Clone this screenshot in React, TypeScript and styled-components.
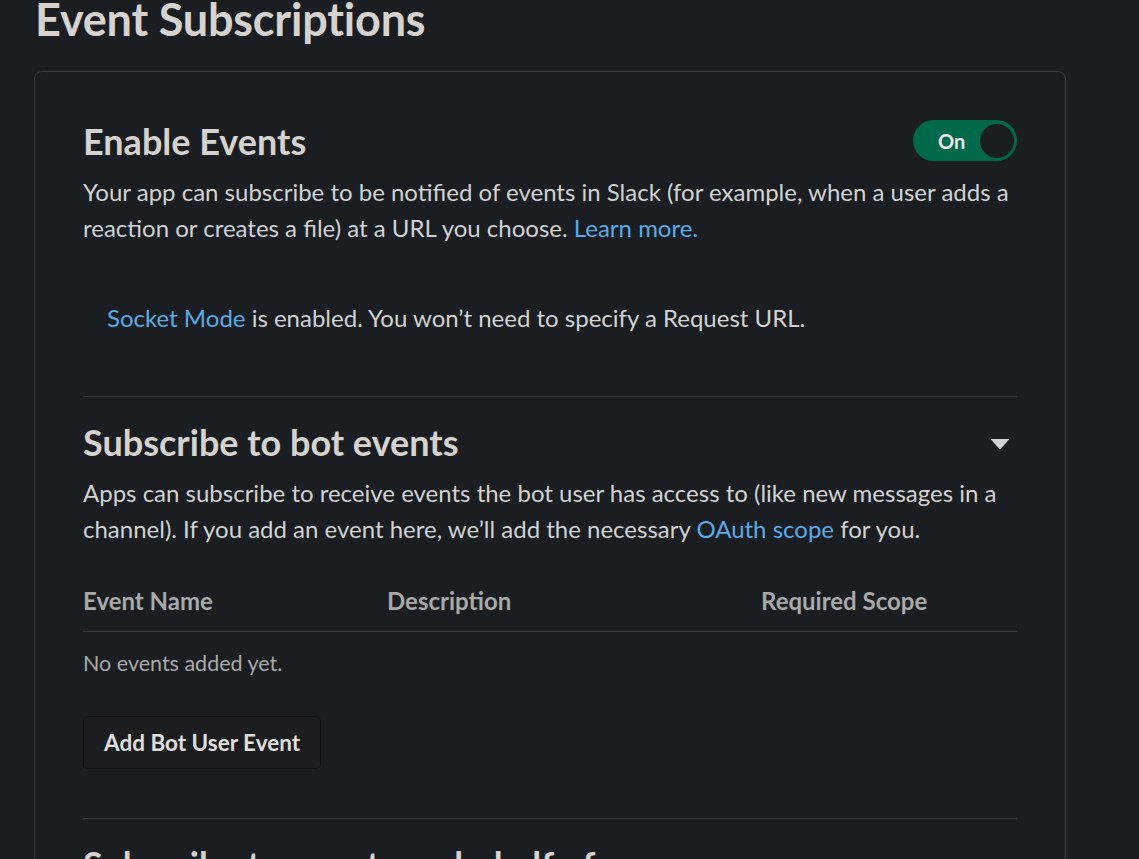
import React from "react";
import styled, { createGlobalStyle } from "styled-components";

const Global = createGlobalStyle`
  html, body {
    margin: 0;
    padding: 0;
    background: #1a1d21;
    overflow: hidden;
  }
  body {
    font-family: Lato, "Noto Sans", "Liberation Sans", sans-serif;
    color: #d1d2d3;
  }
`;

const Page = styled.div`
  width: 1139px;
  height: 859px;
  overflow: hidden;
  box-sizing: border-box;
  padding: 0 74px 0 34px;
`;

const Title = styled.h1`
  margin: -8px 0 25px 1px;
  font-size: 45px;
  line-height: 54px;
  font-weight: 700;
  color: #d6d3cf;
  letter-spacing: -0.2px;
`;

const Card = styled.section`
  border: 1px solid #3a3b3e;
  border-radius: 8px;
  padding: 48px 48px 60px;
  box-sizing: border-box;
  width: 1032px;
`;

const HeaderRow = styled.div`
  display: flex;
  align-items: center;
  justify-content: space-between;
  height: 41px;
`;

const H2 = styled.h2`
  margin: 0;
  font-size: 36px;
  line-height: 36px;
  font-weight: 700;
  color: #d6d3cf;
`;

const Toggle = styled.button`
  display: flex;
  align-items: center;
  justify-content: space-between;
  width: 104px;
  height: 41px;
  border: none;
  border-radius: 21px;
  background: #00694b;
  padding: 0 3px 0 25px;
  box-sizing: border-box;
  font-family: inherit;
  font-size: 20px;
  font-weight: 700;
  color: #e8e8e8;
  cursor: pointer;
`;

const Knob = styled.span`
  width: 34px;
  height: 34px;
  border-radius: 50%;
  background: #1a1d21;
`;

const Para = styled.p<{ $top?: number }>`
  margin: ${(p) => p.$top ?? 13}px 0 0;
  font-size: 24px;
  line-height: 36px;
  color: #d1d2d3;
`;

const Link = styled.a`
  color: #5aaae6;
  text-decoration: none;
`;

const Notice = styled.p`
  margin: 54px 0 0;
  padding: 0 24px;
  font-size: 24px;
  line-height: 36px;
  color: #d1d2d3;
`;

const Divider = styled.hr<{ $top: number }>`
  margin: ${(p) => p.$top}px 0 27px;
  border: none;
  border-top: 1px solid #3a3b3e;
  height: 0;
`;

const SectionHeader = styled.div`
  display: flex;
  align-items: center;
  justify-content: space-between;
`;

const Caret = styled.svg`
  width: 20px;
  height: 12px;
  margin-right: 7px;
  margin-top: 4px;
`;

const Table = styled.div`
  margin-top: 36px;
`;

const HeadRow = styled.div`
  display: grid;
  grid-template-columns: 304px 374px 1fr;
  padding-bottom: 12px;
  border-bottom: 1px solid #3a3b3e;
`;

const HeadCell = styled.div`
  font-size: 24px;
  line-height: 36px;
  font-weight: 700;
  color: #a9a9aa;
`;

const Empty = styled.div`
  margin-top: 15px;
  font-size: 21.5px;
  line-height: 32px;
  color: #a9a9aa;
`;

const Button = styled.button`
  margin-top: 37px;
  height: 53px;
  padding: 0 20px;
  border: 1px solid #101113;
  border-radius: 5px;
  background: #1b1d20;
  font-family: inherit;
  font-size: 22.5px;
  font-weight: 700;
  color: #e0dfdd;
  cursor: pointer;
`;

const CaretIcon = () => (
  <Caret viewBox="0 0 20 12">
    <path
      d="M1.5 1 L18.5 1 Q19.5 1 18.8 1.8 L10.8 10.8 Q10 11.6 9.2 10.8 L1.2 1.8 Q0.5 1 1.5 1 Z"
      fill="#d1d2d3"
    />
  </Caret>
);

export default function App() {
  return (
    <>
      <Global />
      <Page>
        <Title>Event Subscriptions</Title>
        <Card>
          <HeaderRow>
            <H2>Enable Events</H2>
            <Toggle aria-pressed="true">
              On
              <Knob />
            </Toggle>
          </HeaderRow>
          <Para>
            Your app can subscribe to be notified of events in Slack (for example, when a user adds a
            reaction or creates a file) at a URL you choose. <Link href="#">Learn more.</Link>
          </Para>
          <Notice>
            <Link href="#">Socket Mode</Link> is enabled. You won’t need to specify a Request URL.
          </Notice>
          <Divider $top={60} />
          <SectionHeader>
            <H2>Subscribe to bot events</H2>
            <CaretIcon />
          </SectionHeader>
          <Para $top={15}>
            Apps can subscribe to receive events the bot user has access to (like new messages in a
            channel). If you add an event here, we’ll add the necessary <Link href="#">OAuth scope</Link> for you.
          </Para>
          <Table>
            <HeadRow>
              <HeadCell>Event Name</HeadCell>
              <HeadCell>Description</HeadCell>
              <HeadCell>Required Scope</HeadCell>
            </HeadRow>
            <Empty>No events added yet.</Empty>
          </Table>
          <Button>Add Bot User Event</Button>
          <Divider $top={49} />
          <SectionHeader>
            <H2>Subscribe to events on behalf of users</H2>
            <CaretIcon />
          </SectionHeader>
        </Card>
      </Page>
    </>
  );
}
